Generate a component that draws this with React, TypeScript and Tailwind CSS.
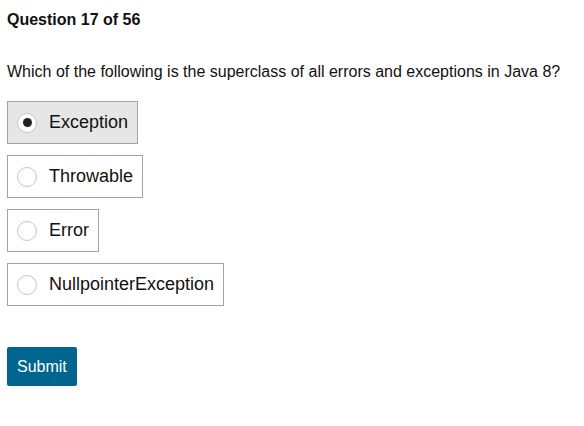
import { useState } from 'react'

const options = ['Exception', 'Throwable', 'Error', 'NullpointerException']

export default function App() {
  const [selected, setSelected] = useState('Exception')
  return (
    <div className="min-h-[426px] bg-white px-[7px] pt-[11px] text-[#111] font-['Liberation_Sans',Arial,sans-serif]">
      <h2 className="text-[16px] font-bold leading-[18px]">Question 17 of 56</h2>
      <p className="mt-[34px] text-[16px] leading-[18px]">
        Which of the following is the superclass of all errors and exceptions in Java 8?
      </p>
      <div className="mt-[20px] flex flex-col items-start gap-[11px]">
        {options.map((opt) => {
          const active = opt === selected
          return (
            <button
              key={opt}
              onClick={() => setSelected(opt)}
              className={
                'flex h-[43px] items-center gap-[12px] border border-[#a3a3a3] pl-[9px] pr-[9px] text-[18px] ' +
                (active ? 'bg-[#e6e6e6]' : 'bg-white')
              }
            >
              <span className="flex h-[20px] w-[20px] items-center justify-center rounded-full border border-[#c4c4c4] bg-white">
                {active && <span className="h-[9px] w-[9px] rounded-full bg-[#222]" />}
              </span>
              <span>{opt}</span>
            </button>
          )
        })}
      </div>
      <button className="mt-[41px] h-[39px] rounded-[2px] bg-[#006690] px-[10px] text-[16px] text-white">
        Submit
      </button>
    </div>
  )
}
